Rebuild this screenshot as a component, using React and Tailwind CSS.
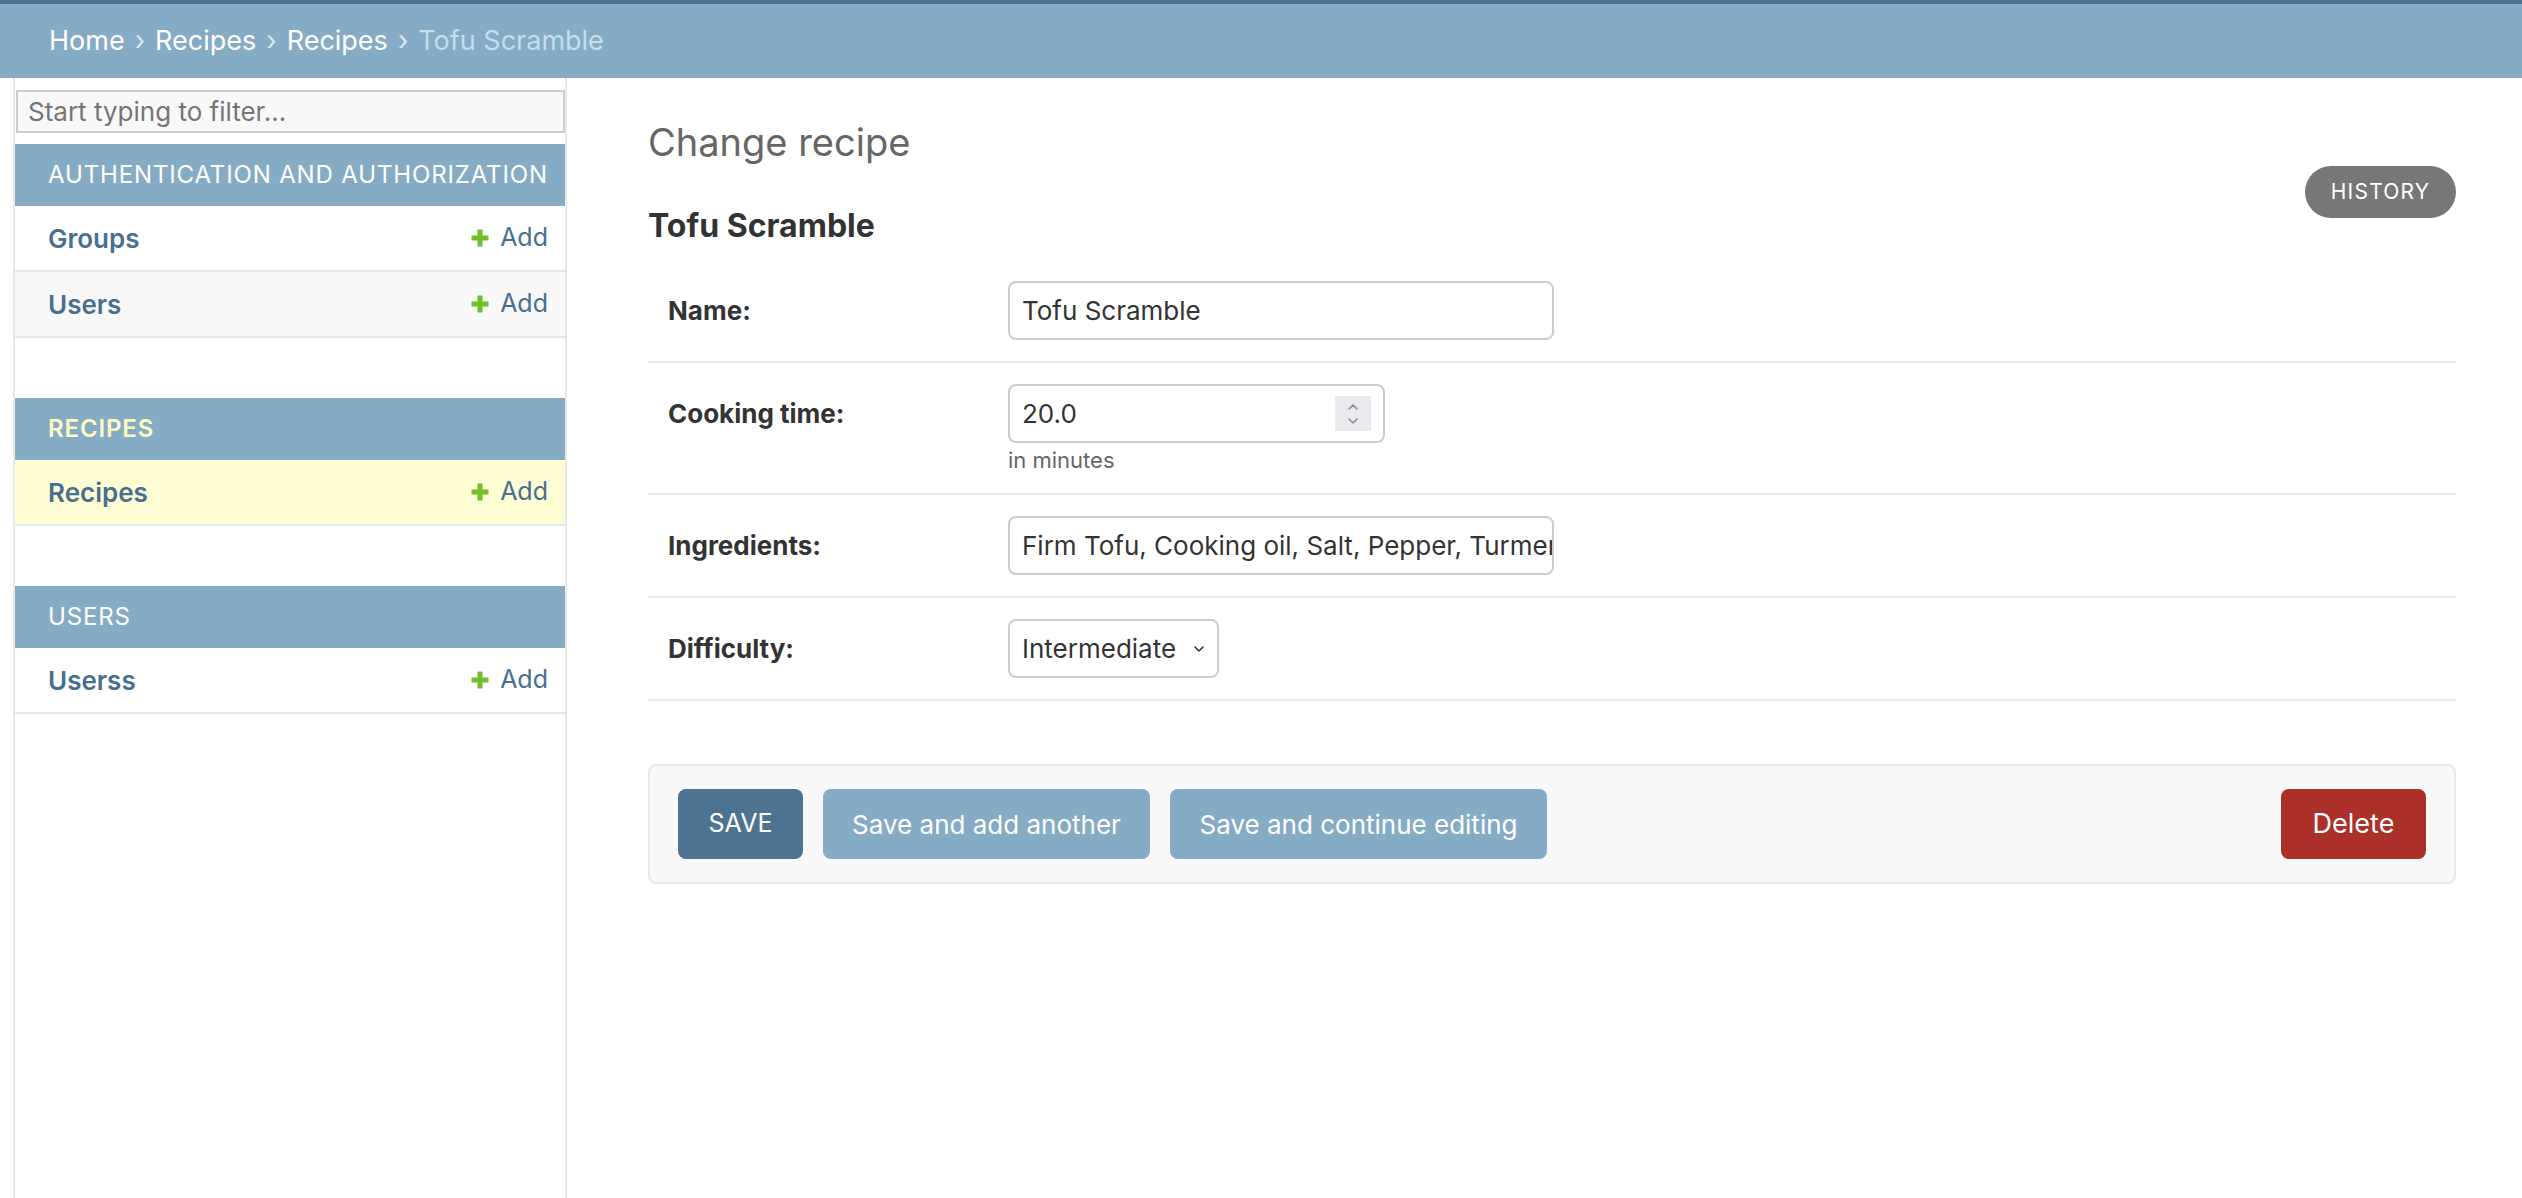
import { ChevronUp, ChevronDown } from 'lucide-react'

const font = { fontFamily: 'Inter, "Noto Sans", sans-serif' }

function AddIcon() {
  return (
    <svg width="20" height="20" viewBox="0 0 20 20" className="shrink-0">
      <path
        fill="#70bf2b"
        d="M8 1.5h4a.5.5 0 0 1 .5.5v5.5H18a.5.5 0 0 1 .5.5v4a.5.5 0 0 1-.5.5h-5.5V18a.5.5 0 0 1-.5.5H8a.5.5 0 0 1-.5-.5v-5.5H2a.5.5 0 0 1-.5-.5V8a.5.5 0 0 1 .5-.5h5.5V2a.5.5 0 0 1 .5-.5z"
      />
    </svg>
  )
}

function ModelRow({ name, shaded, current }) {
  const bg = current ? 'bg-[#fffdd3]' : shaded ? 'bg-[#f8f8f8]' : 'bg-white'
  return (
    <div className={`${bg} h-[66px] border-b-2 border-[#e8e8e8] flex items-center justify-between pl-[33px] pr-[17px]`}>
      <span className="text-[26px] font-semibold text-[#47708f]">{name}</span>
      <span className="flex items-center gap-[10px] text-[25px] text-[#47708f]">
        <AddIcon />
        Add
      </span>
    </div>
  )
}

function Module({ title, current, children }) {
  return (
    <div className="mb-[60px]">
      <div className="h-[62px] bg-[#86abc5] flex items-center pl-[33px]">
        <span
          className={`text-[24px] tracking-[0.85px] uppercase ${
            current ? 'text-[#fdfac2] font-semibold' : 'text-white'
          }`}
        >
          {title}
        </span>
      </div>
      {children}
    </div>
  )
}

function FormRow({ label, children }) {
  return (
    <div className="flex items-start py-[21px] pl-[20px] border-b-2 border-[#e8e8e8]">
      <div className="w-[340px] h-[59px] flex items-center">
        <span className="text-[26px] font-bold text-[#333]">{label}</span>
      </div>
      <div>{children}</div>
    </div>
  )
}

const inputCls =
  'h-[59px] border-2 border-[#cccccc] rounded-[8px] bg-white flex items-center pl-[12px] text-[26px] text-[#333] overflow-hidden whitespace-nowrap'

export default function App() {
  return (
    <div className="min-h-screen bg-white" style={font}>
      <header className="h-[78px] bg-[#86abc5] border-t-4 border-[#4d7390] flex items-center pl-[49px]">
        <nav className="text-[27px] text-white flex items-center gap-[10px]">
          <span>Home</span>
          <span className="text-[#dde8ef]">›</span>
          <span>Recipes</span>
          <span className="text-[#dde8ef]">›</span>
          <span>Recipes</span>
          <span className="text-[#dde8ef]">›</span>
          <span className="text-[#c9dce7]">Tofu Scramble</span>
        </nav>
      </header>

      <div className="flex min-h-[1120px]">
        <div className="w-[15px] shrink-0 border-r-2 border-[#e8e8e8] overflow-hidden">
          <div className="pt-[590px] -ml-[7px] text-[#7fa4bd] text-[18px]">‹</div>
        </div>

        <aside className="w-[552px] shrink-0 border-r-2 border-[#e8e8e8]">
          <div className="mt-[12px] ml-px h-[43px] bg-[#f8f8f8] border-2 border-[#cccccc] flex items-center pl-[10px] text-[26px] text-[#757575]">
            Start typing to filter...
          </div>
          <div className="mt-[11px]">
            <Module title="Authentication and Authorization">
              <ModelRow name="Groups" />
              <ModelRow name="Users" shaded />
            </Module>
            <Module title="Recipes" current>
              <ModelRow name="Recipes" current />
            </Module>
            <Module title="Users">
              <ModelRow name="Userss" />
            </Module>
          </div>
        </aside>

        <main className="flex-1 pl-[81px] pr-[66px] pt-[41px]">
          <h1 className="text-[38px] leading-[46px] text-[#666]">Change recipe</h1>
          <div className="flex justify-between items-start mt-[1px]">
            <h2 className="mt-[42px] text-[32px] leading-[36px] font-bold text-[#333]">Tofu Scramble</h2>
            <span className="h-[52px] w-[151px] rounded-full bg-[#777777] text-white text-[21px] tracking-[1.2px] flex items-center justify-center">
              HISTORY
            </span>
          </div>

          <div className="mt-[16px]">
            <FormRow label="Name:">
              <div className={`${inputCls} w-[546px]`}>Tofu Scramble</div>
            </FormRow>
            <FormRow label="Cooking time:">
              <div className={`${inputCls} w-[377px] justify-between pr-[12px]`}>
                <span>20.0</span>
                <span className="w-[36px] h-[35px] bg-[#e9e9ee] flex flex-col items-center justify-center text-[#8a8a99] -space-y-[2px]">
                  <ChevronUp size={16} strokeWidth={2.4} />
                  <ChevronDown size={16} strokeWidth={2.4} />
                </span>
              </div>
              <div className="mt-[5px] text-[22px] leading-[24px] text-[#666]">in minutes</div>
            </FormRow>
            <FormRow label="Ingredients:">
              <div className={`${inputCls} w-[546px]`}>
                Firm Tofu, Cooking oil, Salt, Pepper, Turmeric, Onion
              </div>
            </FormRow>
            <FormRow label="Difficulty:">
              <div className={`${inputCls} w-[211px] justify-between pr-[12px]`}>
                <span>Intermediate</span>
                <svg width="12" height="8" viewBox="0 0 12 8" className="shrink-0">
                  <path d="M2 2l4 4 4-4" fill="none" stroke="#333" strokeWidth="1.6" strokeLinecap="round" strokeLinejoin="round" />
                </svg>
              </div>
            </FormRow>
          </div>

          <div className="mt-[63px] h-[120px] bg-[#f8f8f8] border-2 border-[#e8e8e8] rounded-[8px] flex items-center justify-between px-[28px]">
            <div className="flex items-center gap-[20px]">
              <span className="w-[125px] h-[70px] rounded-[8px] bg-[#4d7390] text-white text-[25px] flex items-center justify-center">
                SAVE
              </span>
              <span className="w-[327px] h-[70px] rounded-[8px] bg-[#86abc5] text-white text-[26px] flex items-center justify-center">
                Save and add another
              </span>
              <span className="w-[377px] h-[70px] rounded-[8px] bg-[#86abc5] text-white text-[26px] flex items-center justify-center">
                Save and continue editing
              </span>
            </div>
            <span className="w-[145px] h-[70px] rounded-[8px] bg-[#ab302a] text-white text-[27px] flex items-center justify-center">
              Delete
            </span>
          </div>
        </main>
      </div>
    </div>
  )
}
